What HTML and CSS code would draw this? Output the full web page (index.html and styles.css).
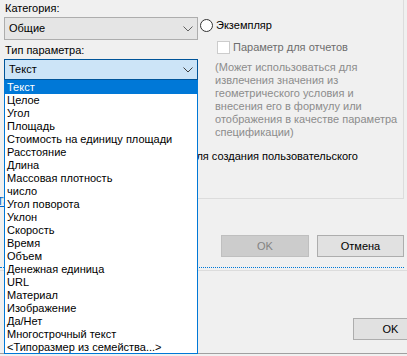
FILE: index.html
```html
<!DOCTYPE html>
<html lang="ru">
<head>
    <meta charset="UTF-8">
    <meta name="viewport" content="width=device-width, initial-scale=1.0">
    <title>Свойства параметра</title>
    <link rel="stylesheet" href="styles.css">
</head>
<body>
    <div class="group">
        <div class="top-row">
            <div class="left-col">
                <div class="field-label">Категория:</div>
                <div class="combo">
                    <span>Общие</span>
                    <svg class="chevron" width="10" height="6" viewBox="0 0 10 6"><polyline points="0.5,0.5 5,5 9.5,0.5" fill="none" stroke="#606060" stroke-width="1"/></svg>
                </div>
                <div class="field-label label-gap">Тип параметра:</div>
                <div class="combo combo-focus">
                    <span>Текст</span>
                    <svg class="chevron" width="10" height="6" viewBox="0 0 10 6"><polyline points="0.5,0.5 5,5 9.5,0.5" fill="none" stroke="#404040" stroke-width="1"/></svg>
                </div>
            </div>
            <div class="right-col">
                <label class="radio-row">
                    <span class="radio"></span>
                    <span>Экземпляр</span>
                </label>
                <label class="check-row">
                    <span class="checkbox"></span>
                    <span>Параметр для отчетов</span>
                </label>
                <p class="note">
                    (Может использоваться для<br>
                    извлечения значения из<br>
                    геометрического условия и<br>
                    внесения его в формулу или<br>
                    отображения в качестве параметра<br>
                    спецификации)
                </p>
            </div>
        </div>
        <div class="custom-line">для создания пользовательского</div>
        <a class="side-link" href="#">Та</a>
    </div>

    <div class="actions">
        <button class="btn btn-disabled" disabled>OK</button>
        <button class="btn btn-cancel">Отмена</button>
    </div>

    <div class="separator"></div>
    <div class="separator-light"></div>

    <div class="footer">
        <button class="btn btn-ok">OK</button>
    </div>

    <ul class="dropdown">
        <li class="selected">Текст</li>
        <li>Целое</li>
        <li>Угол</li>
        <li>Площадь</li>
        <li>Стоимость на единицу площади</li>
        <li>Расстояние</li>
        <li>Длина</li>
        <li>Массовая плотность</li>
        <li>число</li>
        <li>Угол поворота</li>
        <li>Уклон</li>
        <li>Скорость</li>
        <li>Время</li>
        <li>Объем</li>
        <li>Денежная единица</li>
        <li>URL</li>
        <li>Материал</li>
        <li>Изображение</li>
        <li>Да/Нет</li>
        <li>Многострочный текст</li>
        <li>&lt;Типоразмер из семейства...&gt;</li>
    </ul>
</body>
</html>
```

FILE: styles.css
```css
:root {
    --dialog-bg: #f0f0f0;
    --accent: #0078d7;
    --accent-dark: #005499;
    --accent-light: #cce4f7;
    --text-color: #000;
    --gray-text: #6d6d6d;
    --note-text: #8c8c8c;
    --line-light: #dcdcdc;
    --btn-bg: #e1e1e1;
    --btn-border: #adadad;
}

* {
    margin: 0;
    padding: 0;
    box-sizing: border-box;
}

body {
    width: 407px;
    height: 356px;
    overflow: hidden;
    position: relative;
    background-color: var(--dialog-bg);
    color: var(--text-color);
    font-family: "Liberation Sans", Arial, sans-serif;
    font-size: 11px;
    line-height: 13px;
}

.group {
    width: 404px;
    height: 199px;
    border-right: 1px solid var(--line-light);
    border-bottom: 1px solid var(--line-light);
}

.top-row {
    display: flex;
}

.left-col {
    width: 200px;
    padding-left: 4px;
    padding-right: 2px;
}

.field-label {
    margin-top: 2px;
    padding-left: 1px;
}

.label-gap {
    margin-top: 4px;
}

.combo {
    margin-top: 2px;
    width: 194px;
    height: 23px;
    background-color: #e5e5e5;
    border: 1px solid var(--btn-border);
    display: flex;
    align-items: center;
    justify-content: space-between;
    padding: 0 4px 0 4px;
}

.combo-focus {
    height: 21px;
    background-color: var(--accent-light);
    border-color: var(--accent-dark);
}

.right-col {
    flex: 1;
}

.radio-row {
    margin-top: 18px;
    display: flex;
    align-items: center;
    gap: 3px;
    height: 14px;
}

.radio {
    width: 13px;
    height: 13px;
    border: 1px solid #333;
    border-radius: 50%;
    background-color: #fff;
}

.check-row {
    margin-top: 9px;
    margin-left: 17px;
    display: flex;
    align-items: center;
    gap: 3px;
    height: 13px;
    color: var(--gray-text);
}

.checkbox {
    width: 13px;
    height: 13px;
    border: 1px solid #cccccc;
    background-color: #fff;
}

.note {
    margin-top: 7px;
    margin-left: 15px;
    color: var(--note-text);
    white-space: nowrap;
}

.custom-line {
    margin-top: 11px;
    padding-left: 190px;
    white-space: nowrap;
}

.side-link {
    display: block;
    margin-top: 32px;
    margin-left: -3px;
    width: 20px;
    color: #0066cc;
}

.actions {
    margin-top: 36px;
    padding-right: 3px;
    display: flex;
    justify-content: flex-end;
    gap: 8px;
}

.btn {
    height: 22px;
    font-family: inherit;
    font-size: 11px;
    border: 1px solid var(--btn-border);
    background-color: var(--btn-bg);
    color: var(--text-color);
}

.btn-disabled {
    width: 88px;
    background-color: #cccccc;
    border-color: #bfbfbf;
    color: #838383;
}

.btn-cancel {
    width: 87px;
}

.separator {
    margin-top: 10px;
    width: 404px;
    border-top: 1px dotted var(--accent);
}

.separator-light {
    margin-top: 2px;
    border-top: 1px solid var(--line-light);
}

.footer {
    height: 83px;
    padding-top: 47px;
    display: flex;
    justify-content: flex-end;
    align-items: flex-start;
    border-bottom: 1px solid #a0a0a0;
}

.btn-ok {
    width: 75px;
    margin-right: -21px;
    flex-shrink: 0;
}

.dropdown {
    position: absolute;
    left: 4px;
    top: 80px;
    width: 194px;
    height: 274px;
    list-style: none;
    background-color: #fff;
    border: 1px solid var(--accent);
}

.dropdown li {
    height: 13px;
    padding-left: 2px;
    white-space: nowrap;
}

.dropdown .selected {
    background-color: var(--accent);
    color: #fff;
}
```
